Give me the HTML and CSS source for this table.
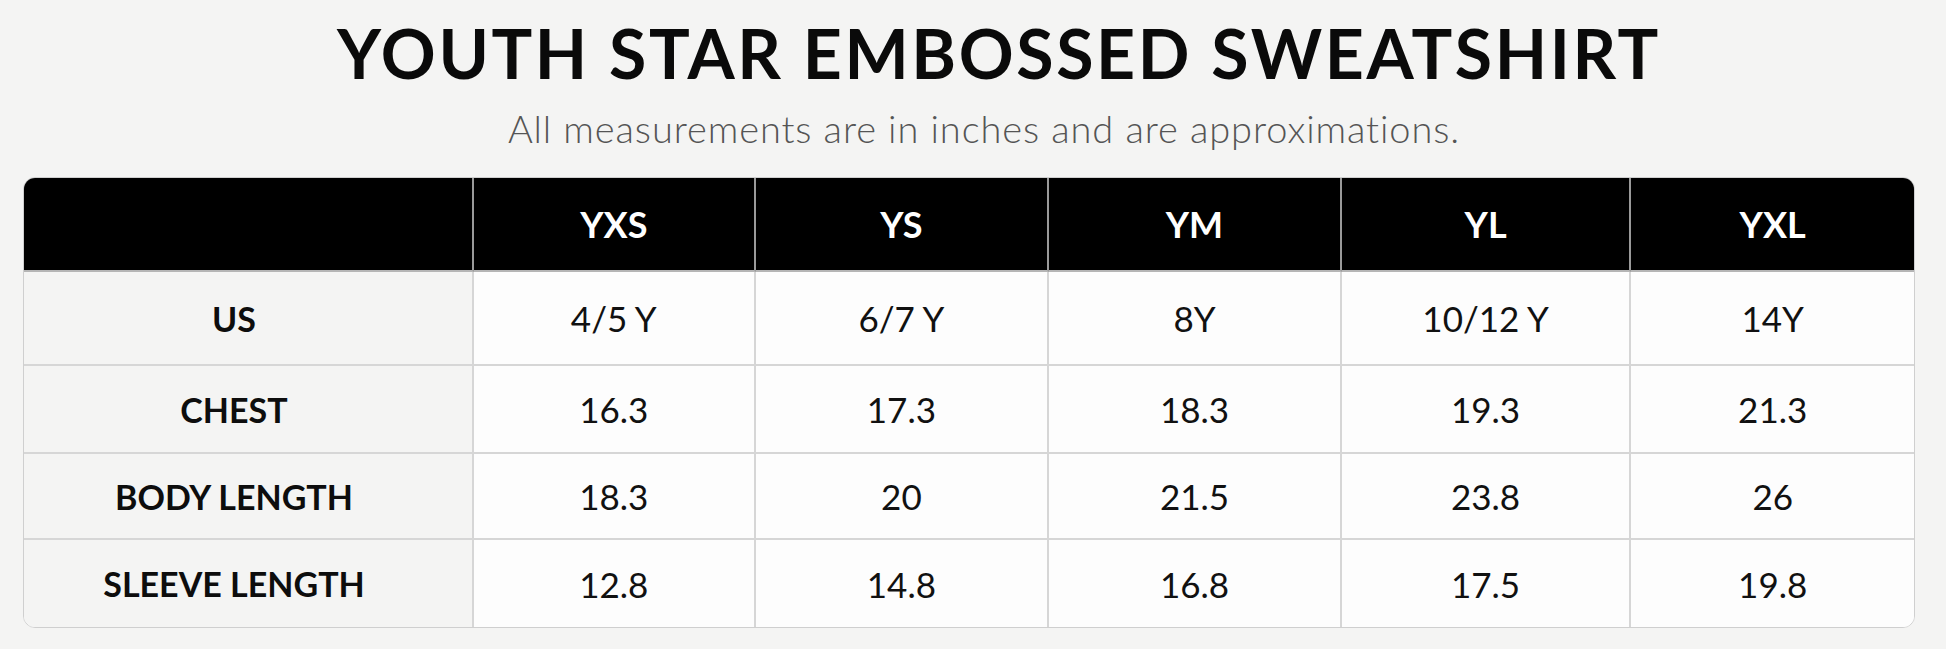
FILE: index.html
```html
<!DOCTYPE html>
<html lang="en">
<head>
<meta charset="utf-8">
<title>Youth Star Embossed Sweatshirt – Size Chart</title>
<link rel="stylesheet" href="styles.css">
</head>
<body>
<main class="page">
  <h1 class="title">YOUTH STAR EMBOSSED SWEATSHIRT</h1>
  <p class="subtitle">All measurements are in inches and are approximations.</p>
  <div class="chart">
    <div class="cell head corner"></div>
    <div class="cell head">YXS</div>
    <div class="cell head">YS</div>
    <div class="cell head">YM</div>
    <div class="cell head">YL</div>
    <div class="cell head last">YXL</div>

    <div class="cell label">US</div>
    <div class="cell value">4/5 Y</div>
    <div class="cell value">6/7 Y</div>
    <div class="cell value">8Y</div>
    <div class="cell value">10/12 Y</div>
    <div class="cell value last">14Y</div>

    <div class="cell label">CHEST</div>
    <div class="cell value">16.3</div>
    <div class="cell value">17.3</div>
    <div class="cell value">18.3</div>
    <div class="cell value">19.3</div>
    <div class="cell value last">21.3</div>

    <div class="cell label">BODY LENGTH</div>
    <div class="cell value">18.3</div>
    <div class="cell value">20</div>
    <div class="cell value">21.5</div>
    <div class="cell value">23.8</div>
    <div class="cell value last">26</div>

    <div class="cell label bottom">SLEEVE LENGTH</div>
    <div class="cell value bottom">12.8</div>
    <div class="cell value bottom">14.8</div>
    <div class="cell value bottom">16.8</div>
    <div class="cell value bottom">17.5</div>
    <div class="cell value bottom last">19.8</div>
  </div>
</main>
</body>
</html>
```

FILE: styles.css
```css
html, body {
  margin: 0;
  padding: 0;
  background: #f4f4f3;
}

body {
  font-family: Lato, "Open Sans", "Liberation Sans", sans-serif;
  color: #111;
}

.page {
  display: flex;
  flex-direction: column;
  align-items: center;
  padding: 13px 31px 0 23px;
}

.title {
  margin: 0;
  padding-left: 60px;
  font-size: 68px;
  line-height: 80px;
  font-weight: 700;
  letter-spacing: 2.6px;
  color: #0a0a0a;
}

.subtitle {
  margin: 13px 0 0;
  padding-left: 30px;
  font-size: 38px;
  line-height: 45px;
  font-weight: 300;
  letter-spacing: 0.9px;
  color: #555;
}

.chart {
  align-self: stretch;
  margin-top: 26px;
  display: grid;
  grid-template-columns: 450px 282fr 294fr 293fr 290fr 283fr;
  grid-template-rows: 94px 94px 88px 86px 87px;
  border: 1px solid #cfcfcf;
  border-radius: 12px;
  overflow: hidden;
  background: #fdfdfd;
}

.cell {
  display: flex;
  align-items: center;
  justify-content: center;
  border-right: 2px solid #d6d6d6;
  border-bottom: 2px solid #d6d6d6;
}

.cell.last {
  border-right: none;
}

.cell.bottom {
  border-bottom: none;
}

.head {
  background: #000;
  color: #fff;
  font-size: 36px;
  font-weight: 700;
  border-right-color: #9a9a9a;
  border-bottom-color: #b5b5b5;
}

.label {
  padding-right: 28px;
  background: #f4f4f3;
  font-size: 34px;
  font-weight: 700;
  color: #0d0d0d;
}

.value {
  background: #fdfdfd;
  font-size: 35px;
  font-weight: 400;
  color: #111;
}
```
